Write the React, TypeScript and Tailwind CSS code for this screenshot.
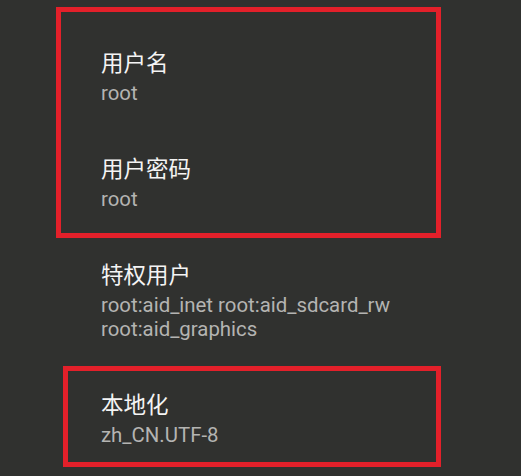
import React from "react";

function Item({ title, sub }: { title: string; sub: React.ReactNode }) {
  return (
    <div className="flex flex-col">
      <div className="text-[22.5px] leading-[30px] text-[#f4f4f4]">{title}</div>
      <div className="mt-[3px] text-[20.4px] leading-[24px] text-[#b4b4b2]">{sub}</div>
    </div>
  );
}

export default function App() {
  return (
    <div
      className="w-[521px] h-[476px] overflow-hidden bg-[#30312f] flex flex-col"
      style={{ fontFamily: 'Roboto, "Noto Sans CJK SC", sans-serif' }}
    >
      <div className="mt-[7px] ml-[56px] w-[385px] h-[231px] border-[5px] border-[#e3202a] pl-[40px] pt-[36px] flex flex-col gap-[49px]">
        <Item title="用户名" sub="root" />
        <Item title="用户密码" sub="root" />
      </div>
      <div className="mt-[22px] ml-[101px]">
        <Item
          title="特权用户"
          sub={
            <>
              root:aid_inet root:aid_sdcard_rw
              <br />
              root:aid_graphics
            </>
          }
        />
      </div>
      <div className="mt-[25px] ml-[63px] w-[378px] h-[101px] border-[5px] border-[#e3202a] pl-[33px] pt-[19px]">
        <Item title="本地化" sub="zh_CN.UTF-8" />
      </div>
    </div>
  );
}
